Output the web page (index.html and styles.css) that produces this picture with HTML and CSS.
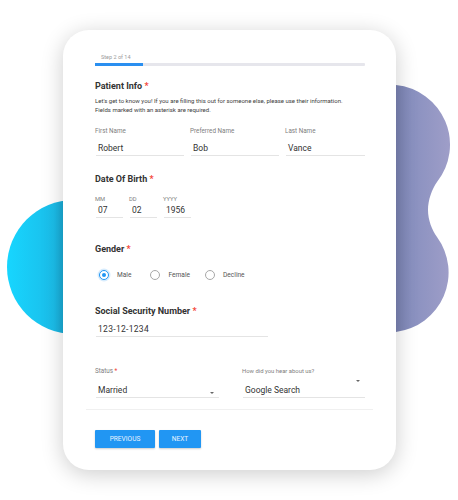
FILE: index.html
```html
<!DOCTYPE html>
<html>
<head>
<meta charset="utf-8">
<link rel="stylesheet" href="styles.css">
</head>
<body>
<div class="stage">
  <svg class="decor" width="458" height="500" viewBox="0 0 458 500" aria-hidden="true">
    <defs>
      <linearGradient id="gBlue" x1="7" y1="0" x2="70" y2="0" gradientUnits="userSpaceOnUse">
        <stop offset="0" stop-color="#17d6ff"/>
        <stop offset="0.75" stop-color="#1bbde9"/>
        <stop offset="1" stop-color="#1a9dc6"/>
      </linearGradient>
      <linearGradient id="gPurple" x1="396" y1="0" x2="451" y2="0" gradientUnits="userSpaceOnUse">
        <stop offset="0" stop-color="#7b83b3"/>
        <stop offset="0.3" stop-color="#8a91c0"/>
        <stop offset="1" stop-color="#9f9ec8"/>
      </linearGradient>
    </defs>
    <circle cx="74" cy="267" r="67" fill="url(#gBlue)"/>
    <path fill="url(#gPurple)" d="M380,85 L396,85 A60,60 0 0 1 437,182 C432,189 428,200 428,210 C428,220 432,230 437,237 A60,60 0 0 1 396,332 L380,332 Z"/>
  </svg>

  <div class="card">
    <div class="step">Step 2 of 14</div>
    <div class="progress"><div class="progress-fill"></div></div>

    <h2 class="section-title">Patient Info <span class="req">*</span></h2>
    <p class="intro">Let's get to know you! If you are filling this out for someone else, please use their information.<br>Fields marked with an asterisk are required.</p>

    <div class="name-row">
      <div class="field">
        <div class="label">First Name</div>
        <div class="input">Robert</div>
      </div>
      <div class="field">
        <div class="label">Preferred Name</div>
        <div class="input">Bob</div>
      </div>
      <div class="field">
        <div class="label">Last Name</div>
        <div class="input">Vance</div>
      </div>
    </div>

    <h2 class="section-title dob-title">Date Of Birth <span class="req">*</span></h2>
    <div class="dob-row">
      <div class="field">
        <div class="label small">MM</div>
        <div class="input tight">07</div>
      </div>
      <div class="field">
        <div class="label small">DD</div>
        <div class="input tight">02</div>
      </div>
      <div class="field">
        <div class="label small">YYYY</div>
        <div class="input tight">1956</div>
      </div>
    </div>

    <h2 class="section-title gender-title">Gender <span class="req">*</span></h2>
    <div class="radio-row">
      <div class="radio-item"><span class="radio checked"></span><span class="radio-label">Male</span></div>
      <div class="radio-item"><span class="radio"></span><span class="radio-label">Female</span></div>
      <div class="radio-item"><span class="radio"></span><span class="radio-label">Decline</span></div>
    </div>

    <h2 class="section-title ssn-title">Social Security Number <span class="req">*</span></h2>
    <div class="input ssn">123-12-1234</div>

    <div class="select-row">
      <div class="field">
        <div class="label">Status <span class="req">*</span></div>
        <div class="input select">Married<span class="caret"></span></div>
      </div>
      <div class="field">
        <div class="label compact">How did you hear about us?</div>
        <div class="input select">Google Search<span class="caret high"></span></div>
      </div>
    </div>

    <div class="divider"></div>

    <div class="actions">
      <button class="btn prev">PREVIOUS</button>
      <button class="btn next">NEXT</button>
    </div>
  </div>
</div>
</body>
</html>
```

FILE: styles.css
```css
* { box-sizing: border-box; }

html, body {
  margin: 0;
  padding: 0;
  background: #ffffff;
}

body {
  font-family: Roboto, "Liberation Sans", Arial, sans-serif;
  color: #333333;
}

.stage {
  position: relative;
  width: 458px;
  height: 500px;
  overflow: hidden;
  padding: 30px 0 0 63px;
}

.decor {
  position: absolute;
  left: 0;
  top: 0;
  z-index: 0;
}

.card {
  position: relative;
  z-index: 1;
  width: 333px;
  height: 440px;
  background: #ffffff;
  border-radius: 26px;
  box-shadow: 0 4px 22px rgba(0, 0, 0, 0.2);
  padding: 23px 31px 0 32px;
}

.step {
  font-size: 5.5px;
  line-height: 8px;
  color: #9a9a9a;
  padding-left: 6px;
}

.progress {
  margin-top: 2px;
  height: 3px;
  background: #e6e6ec;
  border-radius: 1px;
}

.progress-fill {
  width: 48px;
  height: 3px;
  background: #2a8ff0;
}

.section-title {
  margin: 13px 0 0 0;
  font-size: 9px;
  line-height: 14px;
  font-weight: 700;
  color: #333333;
}

.req {
  color: #f44336;
}

.intro {
  margin: 3px 0 0 0;
  font-size: 6px;
  line-height: 9px;
  color: #3c3c3c;
  white-space: nowrap;
}

.name-row {
  margin-top: 13px;
  display: grid;
  grid-template-columns: 89px 89px 1fr;
  gap: 6px;
}

.field {
  display: flex;
  flex-direction: column;
}

.label {
  font-size: 6.3px;
  line-height: 9px;
  color: #808080;
}

.label.small {
  font-size: 5.8px;
  line-height: 8px;
}

.label.compact {
  font-size: 5.9px;
}

.input {
  margin-top: 6px;
  margin-left: 1px;
  padding-left: 2px;
  height: 14px;
  font-size: 8.5px;
  line-height: 12px;
  color: #333333;
  border-bottom: 1px solid #e4e4e4;
}

.input.tight {
  margin-top: 1px;
}

.dob-title {
  margin-top: 16px;
}

.dob-row {
  margin-top: 9px;
  display: grid;
  grid-template-columns: 28px 28px 28px;
  gap: 6px;
}

.gender-title {
  margin-top: 24px;
}

.radio-row {
  margin-top: 13px;
  display: flex;
  align-items: center;
  height: 12px;
  padding-left: 4px;
}

.radio-item {
  display: flex;
  align-items: center;
  margin-right: 19px;
}

.radio-item:nth-child(2) {
  margin-right: 15px;
}

.radio {
  width: 10px;
  height: 10px;
  border-radius: 50%;
  border: 1px solid #a8a8a8;
  background: #ffffff;
  display: inline-block;
  position: relative;
}

.radio.checked {
  border-color: #2196f3;
  box-shadow: 0 0 0 1.5px rgba(33, 150, 243, 0.18);
}

.radio.checked::after {
  content: "";
  position: absolute;
  left: 2px;
  top: 2px;
  width: 4px;
  height: 4px;
  border-radius: 50%;
  background: #2196f3;
}

.radio-label {
  margin-left: 8px;
  font-size: 6.6px;
  line-height: 9px;
  color: #555555;
}

.ssn-title {
  margin-top: 23px;
}

.input.ssn {
  margin-top: 5px;
  width: 172px;
  letter-spacing: 0.3px;
}

.select-row {
  margin-top: 30px;
  display: grid;
  grid-template-columns: 124px 1fr;
  gap: 23px;
}

.input.select {
  margin-top: 8px;
  position: relative;
}

.caret {
  position: absolute;
  right: 5px;
  top: 8px;
  width: 0;
  height: 0;
  border-left: 2.5px solid transparent;
  border-right: 2.5px solid transparent;
  border-top: 2.5px solid #666666;
}

.caret.high {
  right: 5px;
  top: -4px;
}

.divider {
  margin: 11px -8px 0 -9px;
  height: 1px;
  background: #f0f0f0;
}

.actions {
  margin-top: 20px;
  display: flex;
  gap: 4px;
}

.btn {
  height: 18px;
  border: none;
  border-radius: 1px;
  background: #2196f3;
  color: #e8f3ff;
  font-family: Roboto, "Liberation Sans", Arial, sans-serif;
  font-size: 6.6px;
  line-height: 18px;
  padding: 0;
  box-shadow: 0 1px 2px rgba(0, 0, 0, 0.2);
}

.btn.prev { width: 60px; }
.btn.next { width: 42px; }
```
